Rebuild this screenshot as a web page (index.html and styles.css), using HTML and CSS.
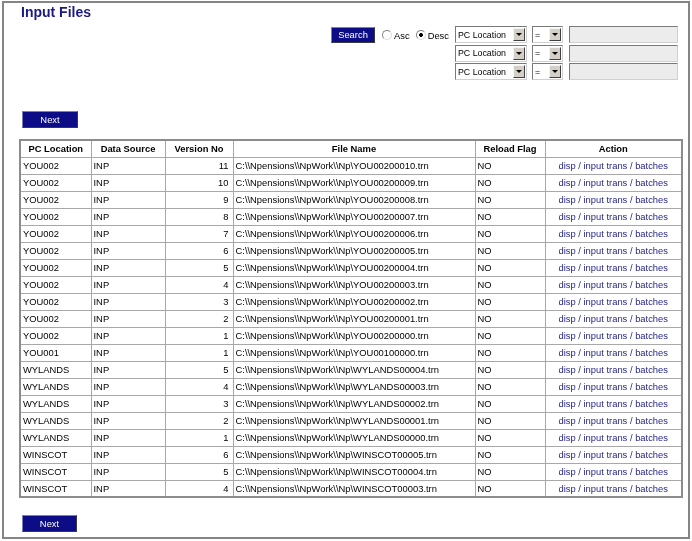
FILE: index.html
```html
<!DOCTYPE html>
<html>
<head>
<meta charset="utf-8">
<title>Input Files</title>
<link rel="stylesheet" href="styles.css">
</head>
<body>
<div class="frame">
  <h1 class="title">Input Files</h1>
  <form class="search">
    <button type="button" class="btn btn-search">Search</button>
    <div class="order">
      <label class="radio"><input type="radio" name="ord"><span>Asc</span></label>
      <label class="radio"><input type="radio" name="ord" checked><span>Desc</span></label>
    </div>
    <div class="sel sel-field">PC Location<span class="arr"></span></div>
    <div class="sel sel-op">=<span class="arr"></span></div>
    <input class="txt" type="text">
    <div class="sel sel-field r2">PC Location<span class="arr"></span></div>
    <div class="sel sel-op">=<span class="arr"></span></div>
    <input class="txt" type="text">
    <div class="sel sel-field r3">PC Location<span class="arr"></span></div>
    <div class="sel sel-op">=<span class="arr"></span></div>
    <input class="txt" type="text">
  </form>
  <button type="button" class="btn btn-next">Next</button>
  <table class="files">
    <colgroup>
      <col class="c-loc"><col class="c-src"><col class="c-ver"><col class="c-file"><col class="c-flag"><col class="c-act">
    </colgroup>
    <thead>
      <tr><th>PC Location</th><th>Data Source</th><th>Version No</th><th>File Name</th><th>Reload Flag</th><th>Action</th></tr>
    </thead>
    <tbody>
      <tr><td>YOU002</td><td>INP</td><td class="num">11</td><td>C:\\Npensions\\NpWork\\Np\YOU00200010.trn</td><td>NO</td><td class="act"><a href="#">disp</a> / <a href="#">input trans</a> / <a href="#">batches</a></td></tr>
      <tr><td>YOU002</td><td>INP</td><td class="num">10</td><td>C:\\Npensions\\NpWork\\Np\YOU00200009.trn</td><td>NO</td><td class="act"><a href="#">disp</a> / <a href="#">input trans</a> / <a href="#">batches</a></td></tr>
      <tr><td>YOU002</td><td>INP</td><td class="num">9</td><td>C:\\Npensions\\NpWork\\Np\YOU00200008.trn</td><td>NO</td><td class="act"><a href="#">disp</a> / <a href="#">input trans</a> / <a href="#">batches</a></td></tr>
      <tr><td>YOU002</td><td>INP</td><td class="num">8</td><td>C:\\Npensions\\NpWork\\Np\YOU00200007.trn</td><td>NO</td><td class="act"><a href="#">disp</a> / <a href="#">input trans</a> / <a href="#">batches</a></td></tr>
      <tr><td>YOU002</td><td>INP</td><td class="num">7</td><td>C:\\Npensions\\NpWork\\Np\YOU00200006.trn</td><td>NO</td><td class="act"><a href="#">disp</a> / <a href="#">input trans</a> / <a href="#">batches</a></td></tr>
      <tr><td>YOU002</td><td>INP</td><td class="num">6</td><td>C:\\Npensions\\NpWork\\Np\YOU00200005.trn</td><td>NO</td><td class="act"><a href="#">disp</a> / <a href="#">input trans</a> / <a href="#">batches</a></td></tr>
      <tr><td>YOU002</td><td>INP</td><td class="num">5</td><td>C:\\Npensions\\NpWork\\Np\YOU00200004.trn</td><td>NO</td><td class="act"><a href="#">disp</a> / <a href="#">input trans</a> / <a href="#">batches</a></td></tr>
      <tr><td>YOU002</td><td>INP</td><td class="num">4</td><td>C:\\Npensions\\NpWork\\Np\YOU00200003.trn</td><td>NO</td><td class="act"><a href="#">disp</a> / <a href="#">input trans</a> / <a href="#">batches</a></td></tr>
      <tr><td>YOU002</td><td>INP</td><td class="num">3</td><td>C:\\Npensions\\NpWork\\Np\YOU00200002.trn</td><td>NO</td><td class="act"><a href="#">disp</a> / <a href="#">input trans</a> / <a href="#">batches</a></td></tr>
      <tr><td>YOU002</td><td>INP</td><td class="num">2</td><td>C:\\Npensions\\NpWork\\Np\YOU00200001.trn</td><td>NO</td><td class="act"><a href="#">disp</a> / <a href="#">input trans</a> / <a href="#">batches</a></td></tr>
      <tr><td>YOU002</td><td>INP</td><td class="num">1</td><td>C:\\Npensions\\NpWork\\Np\YOU00200000.trn</td><td>NO</td><td class="act"><a href="#">disp</a> / <a href="#">input trans</a> / <a href="#">batches</a></td></tr>
      <tr><td>YOU001</td><td>INP</td><td class="num">1</td><td>C:\\Npensions\\NpWork\\Np\YOU00100000.trn</td><td>NO</td><td class="act"><a href="#">disp</a> / <a href="#">input trans</a> / <a href="#">batches</a></td></tr>
      <tr><td>WYLANDS</td><td>INP</td><td class="num">5</td><td>C:\\Npensions\\NpWork\\Np\WYLANDS00004.trn</td><td>NO</td><td class="act"><a href="#">disp</a> / <a href="#">input trans</a> / <a href="#">batches</a></td></tr>
      <tr><td>WYLANDS</td><td>INP</td><td class="num">4</td><td>C:\\Npensions\\NpWork\\Np\WYLANDS00003.trn</td><td>NO</td><td class="act"><a href="#">disp</a> / <a href="#">input trans</a> / <a href="#">batches</a></td></tr>
      <tr><td>WYLANDS</td><td>INP</td><td class="num">3</td><td>C:\\Npensions\\NpWork\\Np\WYLANDS00002.trn</td><td>NO</td><td class="act"><a href="#">disp</a> / <a href="#">input trans</a> / <a href="#">batches</a></td></tr>
      <tr><td>WYLANDS</td><td>INP</td><td class="num">2</td><td>C:\\Npensions\\NpWork\\Np\WYLANDS00001.trn</td><td>NO</td><td class="act"><a href="#">disp</a> / <a href="#">input trans</a> / <a href="#">batches</a></td></tr>
      <tr><td>WYLANDS</td><td>INP</td><td class="num">1</td><td>C:\\Npensions\\NpWork\\Np\WYLANDS00000.trn</td><td>NO</td><td class="act"><a href="#">disp</a> / <a href="#">input trans</a> / <a href="#">batches</a></td></tr>
      <tr><td>WINSCOT</td><td>INP</td><td class="num">6</td><td>C:\\Npensions\\NpWork\\Np\WINSCOT00005.trn</td><td>NO</td><td class="act"><a href="#">disp</a> / <a href="#">input trans</a> / <a href="#">batches</a></td></tr>
      <tr><td>WINSCOT</td><td>INP</td><td class="num">5</td><td>C:\\Npensions\\NpWork\\Np\WINSCOT00004.trn</td><td>NO</td><td class="act"><a href="#">disp</a> / <a href="#">input trans</a> / <a href="#">batches</a></td></tr>
      <tr><td>WINSCOT</td><td>INP</td><td class="num">4</td><td>C:\\Npensions\\NpWork\\Np\WINSCOT00003.trn</td><td>NO</td><td class="act"><a href="#">disp</a> / <a href="#">input trans</a> / <a href="#">batches</a></td></tr>
    </tbody>
  </table>
  <button type="button" class="btn btn-next btn-bottom">Next</button>
</div>
</body>
</html>
```

FILE: styles.css
```css
* { box-sizing: border-box; }
html, body { margin: 0; padding: 0; background: #fff; }
body { font-family: "Liberation Sans", Arial, sans-serif; color: #000; }

.frame {
  margin: 1px 0 0 2px;
  width: 688px;
  height: 538px;
  border: 2px solid #858585;
  overflow: hidden;
  will-change: transform;
}

.title {
  margin: 1px 0 0 17px;
  font-size: 14px;
  line-height: 16px;
  height: 16px;
  font-weight: bold;
  color: #1a1a80;
}

/* search block */
.search {
  display: grid;
  grid-template-columns: 44px 80px 77px 37px 109px;
  grid-auto-rows: 17px;
  row-gap: 1.5px;
  align-items: center;
  width: max-content;
  margin: 6px 10px 0 auto;
  font-size: 9.4px;
}
.r2, .r3 { grid-column: 3; }

.btn {
  display: flex;
  align-items: center;
  justify-content: center;
  height: 17px;
  padding: 0;
  background: #0c0c86;
  color: #fff;
  font-family: "Liberation Sans", Arial, sans-serif;
  font-size: 9.4px;
  border: 1px solid;
  border-color: #7d7dbb #3a3a3a #3a3a3a #7d7dbb;
}
.btn-search { width: 44px; height: 16px; }
.btn-next { width: 56px; margin: 31px 0 0 18px; }
.btn-bottom { width: 55px; margin-top: 17px; }

.order { display: flex; align-items: center; padding-left: 7px; }
.radio { display: flex; align-items: center; gap: 2px; margin-right: 6px; color: #000; }
.radio input {
  appearance: none;
  -webkit-appearance: none;
  margin: 0;
  width: 10px;
  height: 10px;
  border-radius: 50%;
  border: 1px solid;
  border-color: #808080 #dcdcdc #dcdcdc #808080;
  background: #fff;
}
.radio input:checked {
  background: radial-gradient(circle, #000 0 1.6px, #fff 2.2px);
}
.radio span { position: relative; top: 1px; }

.sel {
  display: flex;
  align-items: center;
  justify-content: space-between;
  height: 17px;
  padding-left: 2px;
  border: 1px solid;
  border-color: #7a7a7a #d0d0d0 #d0d0d0 #7a7a7a;
  background: #fff;
  font-size: 8.8px;
  color: #000;
}
.sel-field { width: 72px; }
.sel-op { width: 31px; }
.arr {
  position: relative;
  width: 12px;
  height: 13px;
  margin-right: 1px;
  background: #d4d0c8;
  border: 1px solid;
  border-color: #f4f4f4 #404040 #404040 #f4f4f4;
}
.arr::after {
  content: "";
  position: absolute;
  left: 2px;
  top: 4px;
  border-left: 3px solid transparent;
  border-right: 3px solid transparent;
  border-top: 3px solid #000;
}

.txt {
  width: 109px;
  height: 17px;
  margin: 0;
  padding: 0;
  background: #ececec;
  border: 1px solid;
  border-color: #7a7a7a #d0d0d0 #d0d0d0 #7a7a7a;
}

/* table */
.files {
  margin: 11px 0 0 15px;
  width: 662px;
  table-layout: fixed;
  border-collapse: collapse;
  border: 2px solid #8c8c8c;
  font-size: 9.4px;
  color: #000;
}
.c-loc { width: 71px; }
.c-src { width: 74px; }
.c-ver { width: 68px; }
.c-file { width: 242px; }
.c-flag { width: 70px; }
.c-act { width: 137px; }

.files th, .files td {
  height: 17px;
  padding: 0 2px;
  border: 1px solid #a8a8a8;
  white-space: nowrap;
  overflow: hidden;
  text-align: left;
  color: #000;
}
.files th { text-align: center; font-weight: bold; }
.files td.num { text-align: right; padding-right: 4px; }
.files td.act { text-align: center; color: #27278a; }
.act a { color: #27278a; text-decoration: none; }
```
